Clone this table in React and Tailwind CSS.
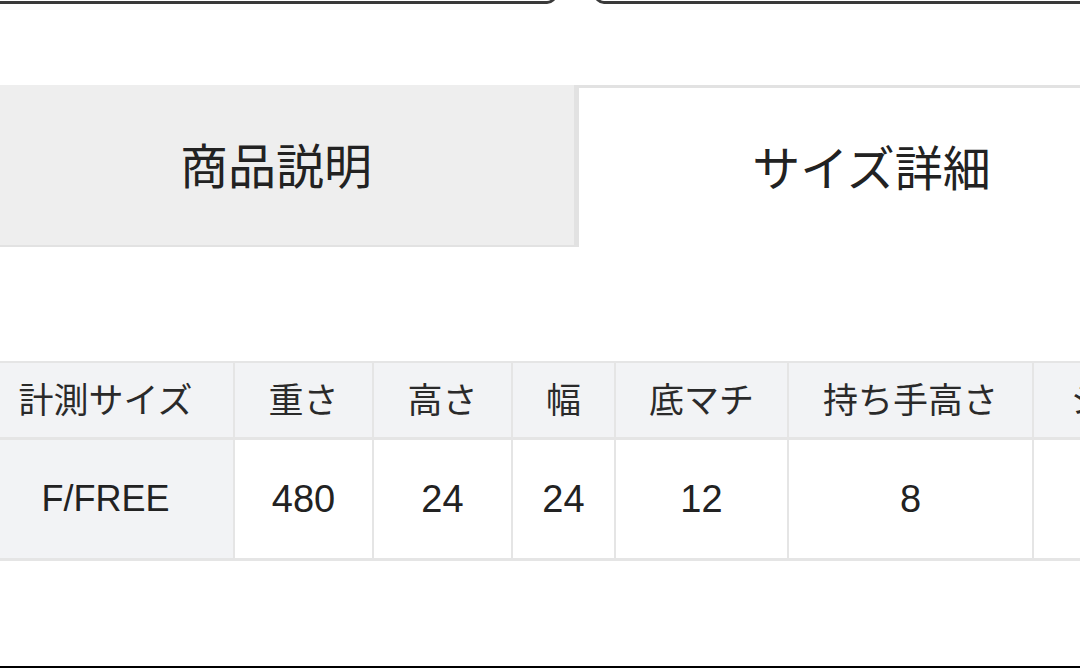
export default function App() {
  const font = { fontFamily: '"Liberation Sans", "Noto Sans CJK JP", sans-serif' }

  const COLS = [
    { w: 'w-[257px]', head: '計測サイズ', val: 'F/FREE', gray: true },
    { w: 'w-[139px]', head: '重さ', val: '480' },
    { w: 'w-[139px]', head: '高さ', val: '24' },
    { w: 'w-[103px]', head: '幅', val: '24' },
    { w: 'w-[173px]', head: '底マチ', val: '12' },
    { w: 'w-[245px]', head: '持ち手高さ', val: '8' },
    { w: 'w-[250px]', head: 'ショルダー', val: '' },
  ]

  return (
    <div className="w-[1080px] h-[668px] overflow-hidden bg-white flex flex-col text-[#222]" style={font}>
      <div className="-ml-[22px] w-[1300px] flex flex-col">

        {/* buttons above (cut off) */}
        <div className="flex -mt-[36px] h-[40px]">
          <div className="ml-[10px] w-[569px] h-[40px] rounded-b-[10px] border-[3px] border-[#3a3a3a]" />
          <div className="ml-[37px] w-[600px] h-[40px] rounded-b-[10px] border-[3px] border-[#3a3a3a]" />
        </div>

        {/* tabs */}
        <div className="flex mt-[81px] h-[162px]">
          <div className="w-[598px] h-full bg-[#eeeeee] border-b-2 border-r-2 border-[#e2e2e2] flex items-center justify-center text-[48px] leading-none pt-[6px]">
            商品説明
          </div>
          <div className="w-[588px] h-full bg-white border-t-[3px] border-l-[3px] border-[#e2e2e2] flex items-center justify-center text-[48px] leading-none pt-[4px]">
            サイズ詳細
          </div>
        </div>

        {/* size table */}
        <div className="mt-[114px] border-t-2 border-b-[3px] border-[#e5e5e5] flex flex-col">
          <div className="flex h-[77px] bg-[#f2f3f5] border-b-[3px] border-[#e5e5e5]">
            {COLS.map(c => (
              <div key={c.head} className={`${c.w} shrink-0 border-r-2 border-[#e5e5e5] flex items-center justify-center text-[35px] leading-none text-[#2a2a2a] whitespace-nowrap pt-[1px]`}>
                {c.head}
              </div>
            ))}
          </div>
          <div className="flex h-[118px]">
            {COLS.map(c => (
              <div key={c.head} className={`${c.w} shrink-0 border-r-2 border-[#e5e5e5] flex items-center justify-center leading-none whitespace-nowrap ${c.gray ? 'bg-[#f2f3f5] text-[36px]' : 'bg-white text-[38px]'}`}>
                {c.val}
              </div>
            ))}
          </div>
        </div>
      </div>

      <div className="mt-auto h-[2px] bg-black" />
    </div>
  )
}
